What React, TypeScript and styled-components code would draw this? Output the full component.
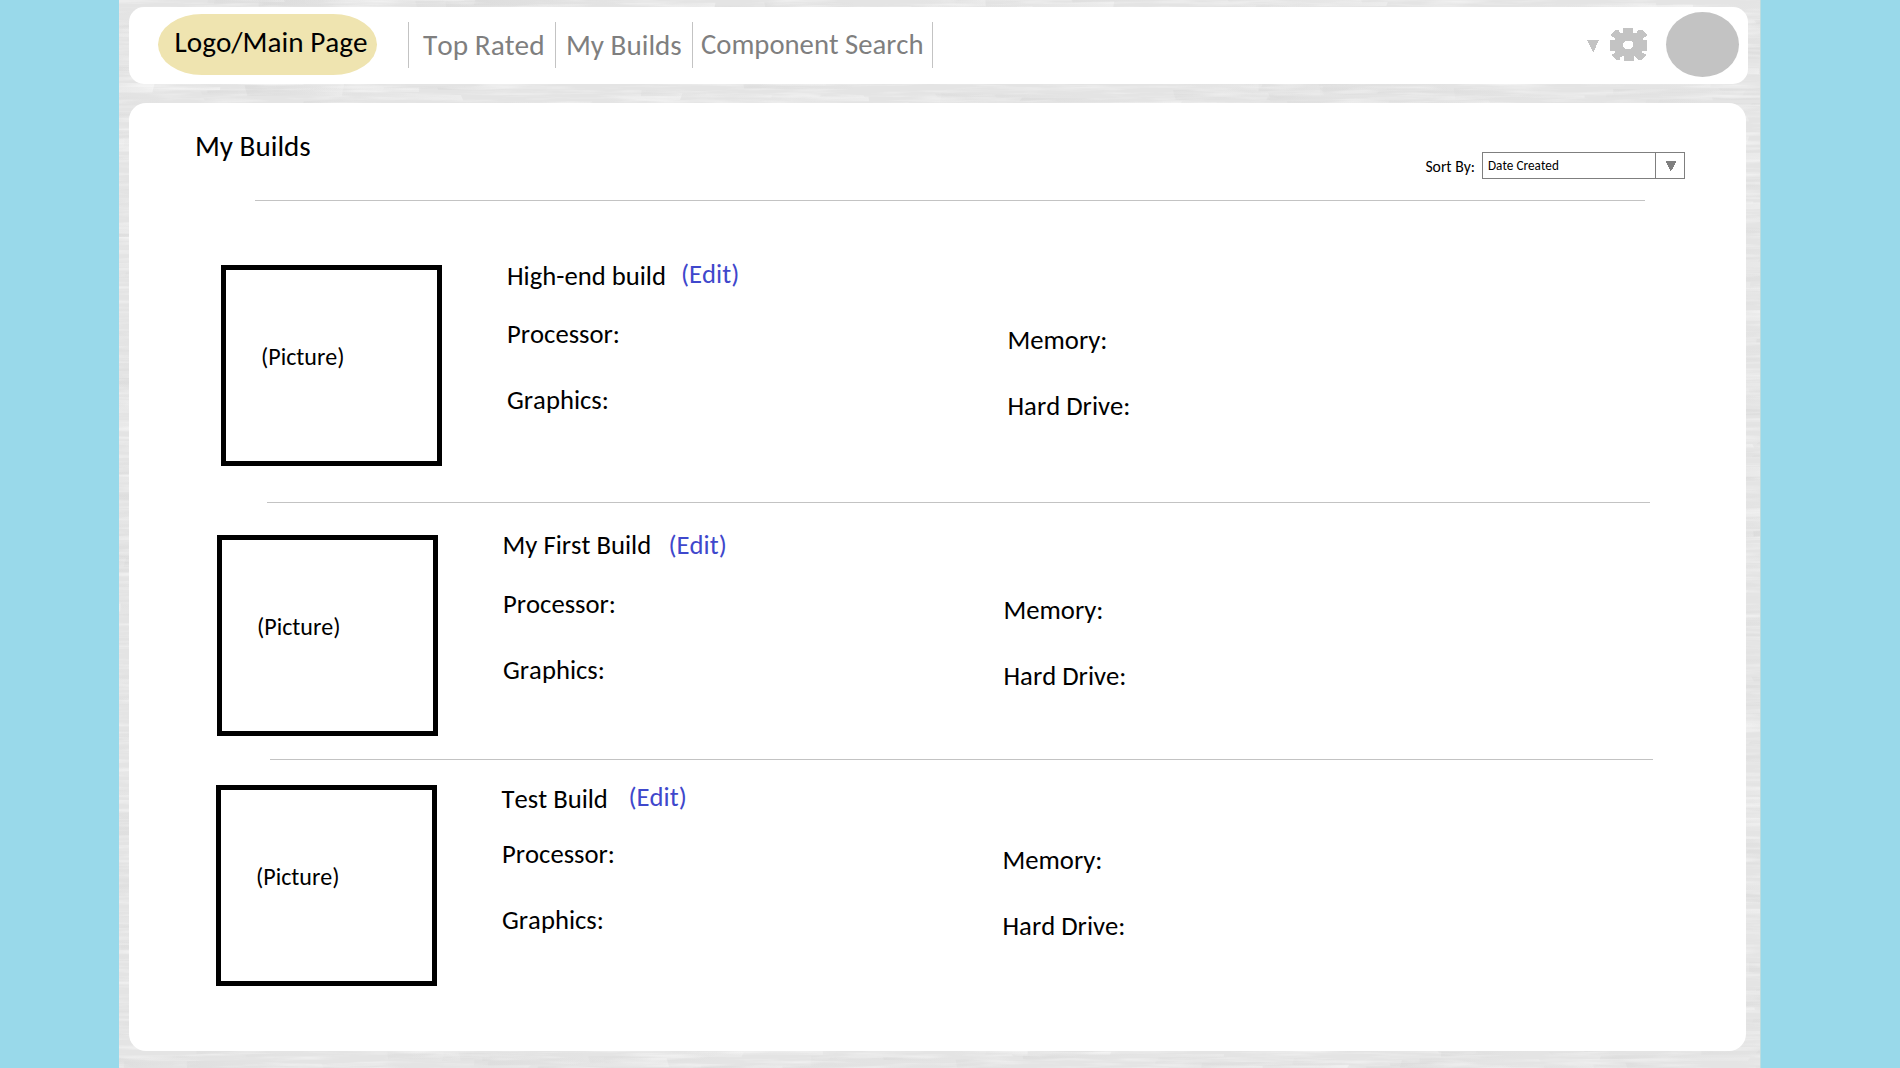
import React from 'react';
import styled, { createGlobalStyle } from 'styled-components';

const GlobalStyle = createGlobalStyle`
  body { margin: 0; background: #99d9ea; }
  *, *::before, *::after { box-sizing: border-box; }
`;

const Page = styled.div`
  width: 1900px;
  height: 1068px;
  padding-left: 119px;
  overflow: hidden;
  background: #99d9ea;
  color: #000;
  font-family: Carlito, Calibri, Lato, sans-serif;
  font-size: 26.67px;
  font-kerning: none;
  line-height: 32px;
  white-space: nowrap;
`;

const Board = styled.div`
  position: relative;
  display: flex;
  flex-direction: column;
  gap: 19px;
  width: 1642px;
  height: 1068px;
  padding: 7px 0 0 10px;
  border-right: 1px solid #bcdce0;
  background: #e4e4e4;
`;

const Texture = styled.svg`
  position: absolute;
  inset: 0;
  width: 1641px;
  height: 1068px;
`;

const Header = styled.header`
  position: relative;
  display: flex;
  align-items: flex-start;
  justify-content: space-between;
  width: 1619px;
  height: 77px;
  border-radius: 15px;
  background: #fff;
`;

const HeaderGroup = styled.div`
  display: flex;
  align-items: flex-start;
`;

const Logo = styled.a`
  width: 219px;
  height: 61px;
  margin: 7px 31px 0 29px;
  padding: 12px 0 0 16.5px;
  border-radius: 44px / 30.5px;
  background: #efe4b0;
  font-size: 29.2px;
`;

const Nav = styled.nav`
  display: flex;
  height: 46px;
  margin-top: 15px;
  border-left: 1px solid #c3c3c3;
`;

const NavItem = styled.a<{ $width: number; $indent: number; $top?: number; $size?: number }>`
  width: ${(p) => p.$width}px;
  padding: ${(p) => p.$top ?? 7}px 0 0 ${(p) => p.$indent}px;
  border-right: 1px solid #c3c3c3;
  color: #7f7f7f;
  font-size: ${(p) => p.$size ?? 29.33}px;
`;

const MenuArrow = styled.svg`
  width: 12px;
  height: 12px;
  margin: 33px 11px 0 0;
  fill: #c3c3c3;
`;

const Gear = styled.svg`
  width: 37px;
  height: 33px;
  margin: 21px 19px 0 0;
  fill: #c3c3c3;
`;

const Avatar = styled.div`
  width: 73px;
  height: 65px;
  margin: 5px 9px 0 0;
  border-radius: 50%;
  background: #c3c3c3;
`;

const Panel = styled.main`
  position: relative;
  display: flex;
  flex-direction: column;
  width: 1617px;
  height: 948px;
  border-radius: 17px;
  background: #fff;
`;

const TitleBar = styled.div`
  display: flex;
  align-items: flex-start;
  justify-content: space-between;
  height: 97px;
  padding: 0 61px 0 66px;
`;

const Title = styled.h1`
  margin: 27px 0 0;
  font-size: 29.1px;
  font-weight: 400;
`;

const Sort = styled.label`
  display: flex;
  margin-top: 49px;
  font-size: 15.7px;
`;

const SortLabel = styled.span`
  margin: -1px 7px 0 0;
`;

const Select = styled.div`
  display: flex;
  width: 203px;
  height: 27px;
  border: 1px solid #7f7f7f;
  font-size: 13.2px;
  line-height: 25px;
`;

const SelectValue = styled.span`
  flex: 1;
  padding-left: 5px;
`;

const SelectButton = styled.span`
  display: flex;
  width: 29px;
  padding: 8px 0 0 9.5px;
  border-left: 1px solid #7f7f7f;
`;

const SelectArrow = styled.svg`
  width: 10px;
  height: 10px;
  fill: #7f7f7f;
`;

const Rule = styled.hr<{ $start: number; $width: number }>`
  flex: none;
  width: ${(p) => p.$width}px;
  height: 1px;
  margin: 0 0 0 ${(p) => p.$start}px;
  border: 0;
  background: #c3c3c3;
`;

const BuildRow = styled.section<{ $height: number; $top: number; $left: number }>`
  display: flex;
  align-items: flex-start;
  flex: none;
  height: ${(p) => p.$height}px;
  padding: ${(p) => p.$top}px 0 0 ${(p) => p.$left}px;
`;

const Picture = styled.div`
  width: 221px;
  height: 201px;
  padding: 71px 0 0 35px;
  border: 5px solid #000;
  font-size: 24px;
`;

const Summary = styled.div`
  display: flex;
  flex-direction: column;
  width: 500.5px;
  margin-left: 65px;
`;

const Heading = styled.div<{ $shift: number }>`
  display: flex;
  height: 53px;
  margin-left: ${(p) => p.$shift}px;
`;

const BuildName = styled.h2<{ $top: number; $width: number }>`
  width: ${(p) => p.$width}px;
  margin: ${(p) => p.$top}px 0 0;
  font-size: inherit;
  font-weight: 400;
`;

const EditLink = styled.a<{ $top: number }>`
  margin-top: ${(p) => p.$top}px;
  color: #3f48cc;
`;

const Specs = styled.div<{ $top?: number }>`
  display: flex;
  flex-direction: column;
  gap: 34px;
  margin-top: ${(p) => p.$top ?? 0}px;
`;

const builds = [
  { name: 'High-end build', height: 301, top: 64, left: 92, nameTop: -5, editTop: -7, nameWidth: 174, shift: 0 },
  { name: 'My First Build', height: 256, top: 32, left: 88, nameTop: -6, editTop: -6, nameWidth: 166, shift: -0.5 },
  { name: 'Test Build', height: 291, top: 25, left: 87, nameTop: -2, editTop: -4, nameWidth: 127, shift: -0.5 },
];

const rules = [
  { start: 126, width: 1390 },
  { start: 138, width: 1383 },
  { start: 141, width: 1383 },
];

const seeded = (seed: number) => () => {
  seed = (seed * 1664525 + 1013904223) % 4294967296;
  return seed / 4294967296;
};

const random = seeded(17);
const strokes = Array.from({ length: 3000 }, () => {
  const x = random() * 1740 - 100;
  const y = random() * 1080 - 6;
  const w = 40 + random() * 120;
  const h = 2 + random() * random() * 12;
  const tilt = (random() - 0.65) * 4;
  return {
    d: `M${x} ${y}l${w} ${tilt}l${random() * 6 - 3} ${h}l${-w} ${-tilt}z`,
    fill: random() < 0.64 ? 'url(#dark)' : 'url(#light)',
    opacity: 0.25 + random() * 0.55,
  };
});

function PaintedBackground() {
  return (
    <Texture viewBox="0 0 1641 1068" aria-hidden="true">
      <defs>
        <linearGradient id="light">
          <stop offset="0" stopColor="#e6e6e6" stopOpacity="0.2" />
          <stop offset="1" stopColor="#f2f2f2" />
        </linearGradient>
        <linearGradient id="dark">
          <stop offset="0" stopColor="#dbdbdb" />
          <stop offset="1" stopColor="#e2e2e2" stopOpacity="0.3" />
        </linearGradient>
        <filter id="streaks" x="0" y="0" width="100%" height="100%">
          <feTurbulence type="fractalNoise" baseFrequency="0.014 0.22" numOctaves="3" seed="4" />
          <feColorMatrix values="0 0 0 0 1  0 0 0 0 1  0 0 0 0 1  1.1 0 0 0 -0.5" />
        </filter>
      </defs>
      {strokes.map((s, i) => (
        <path key={i} d={s.d} fill={s.fill} opacity={s.opacity} />
      ))}
      <rect width="1641" height="1068" filter="url(#streaks)" />
    </Texture>
  );
}

export default function App() {
  return (
    <Page>
      <GlobalStyle />
      <Board>
        <PaintedBackground />
        <Header>
          <HeaderGroup>
            <Logo>Logo/Main Page</Logo>
            <Nav>
              <NavItem $width={147} $indent={14}>Top Rated</NavItem>
              <NavItem $width={137} $indent={10} $size={29.1}>My Builds</NavItem>
              <NavItem $width={240} $indent={8} $top={7} $size={28.7}>Component Search</NavItem>
            </Nav>
          </HeaderGroup>
          <HeaderGroup>
            <MenuArrow viewBox="0 0 12 12" shapeRendering="crispEdges">
              <path d="M0 0H12L6.5 12H5.8Z" />
            </MenuArrow>
            <Gear viewBox="0 0 37 33" shapeRendering="crispEdges">
              <path
                fillRule="evenodd"
                d="M13 0H23V5H27L28 2H32L37 7V8L33 10V12H37V23H32V25L36 26V28L31 32H28L26 29L24 28V33H14V28L10 29V32H7L2 28V26L5 25V23H0V12H5V10L1 8V7L5 2H9L10 5H13ZM16 13L13 15V18L15 21H20L23 19V15L21 13Z"
              />
            </Gear>
            <Avatar />
          </HeaderGroup>
        </Header>
        <Panel>
          <TitleBar>
            <Title>My Builds</Title>
            <Sort>
              <SortLabel>Sort By:</SortLabel>
              <Select>
                <SelectValue>Date Created</SelectValue>
                <SelectButton>
                  <SelectArrow viewBox="0 0 10 10" shapeRendering="crispEdges">
                    <path d="M0 0H10V1L5.5 9.5H4.5L0 1Z" />
                  </SelectArrow>
                </SelectButton>
              </Select>
            </Sort>
          </TitleBar>
          {builds.map((b, i) => (
            <React.Fragment key={b.name}>
              <Rule $start={rules[i].start} $width={rules[i].width} />
              <BuildRow $height={b.height} $top={b.top} $left={b.left}>
                <Picture>(Picture)</Picture>
                <Summary>
                  <Heading $shift={b.shift}>
                    <BuildName $top={b.nameTop} $width={b.nameWidth}>{b.name}</BuildName>
                    <EditLink $top={b.editTop}>(Edit)</EditLink>
                  </Heading>
                  <Specs>
                    <span>Processor:</span>
                    <span>Graphics:</span>
                  </Specs>
                </Summary>
                <Specs $top={59}>
                  <span>Memory:</span>
                  <span>Hard Drive:</span>
                </Specs>
              </BuildRow>
            </React.Fragment>
          ))}
        </Panel>
      </Board>
    </Page>
  );
}
